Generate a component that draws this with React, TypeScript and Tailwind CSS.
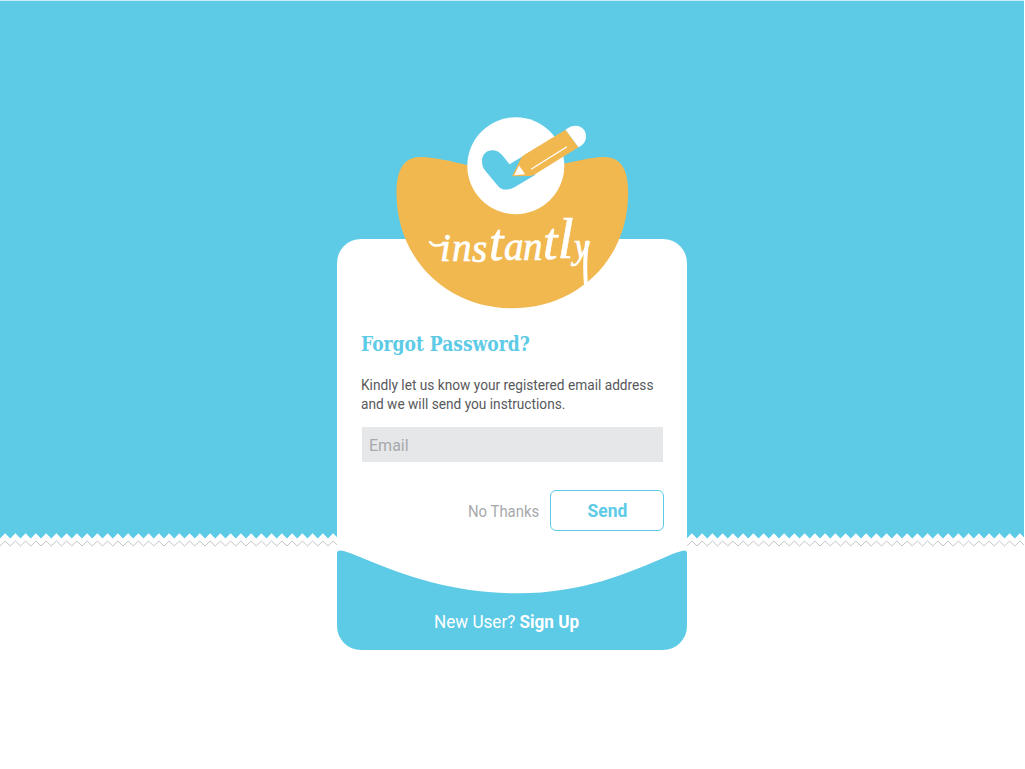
import React from "react";

const PERIOD = 10.25;

function zigzag(top: number, bottom: number, phase: number): string {
  const points: string[] = [];
  for (let i = -1; i < 102; i += 1) {
    const x = phase + i * PERIOD;
    points.push(`${x},${bottom}`, `${x + PERIOD / 2},${top}`);
  }
  return points.join(" ");
}

function Backdrop() {
  return (
    <div className="absolute inset-x-0 top-0 flex w-[1024px] flex-col overflow-hidden">
      <div className="h-px bg-[#cdeef8]" />
      <div className="h-[532px] bg-[#5dcae6]" />
      <svg width="1024" height="16" viewBox="0 0 1024 16" className="block">
        <polygon points={`-20,0 ${zigzag(0.3, 5.4, 0)} 1060,0`} fill="#5dcae6" />
        <polyline points={zigzag(8, 13, 0)} fill="none" stroke="#c4c4c4" strokeWidth="1" />
      </svg>
    </div>
  );
}

function Logo() {
  return (
    <svg width="234" height="194" viewBox="395 116 234 194" className="block" role="img" aria-label="instantly">
      <path
        d="M467 165C450 161 436 157.500 421 157C404 157 396.500 169 396.500 193C396.500 260 448 308.300 512 308.300C577 308.300 628.200 260 628.200 193C628.200 168 620 157 604 157C589 157.500 579 161 564 163.500Z"
        fill="#f1b850"
      />
      <circle cx="515.800" cy="165.700" r="48.500" fill="#fff" />
      <path
        d="M509.500 164.300L503.300 156.500C500 152.500 497 150.300 492.500 150.300C486 150.300 482 155 482 161.500C482 165 483 168 485.500 171L498 186C501.500 190.500 508 190.500 514 187.500L535 175L530 152Z"
        fill="#5dcae6"
      />
      <path d="M512 176.300L520.300 159.500Q521.500 156.500 524 155L565.500 129.800L578.500 147.200L535 174.300Q532.500 175.800 530 175.900Z" fill="#f1b850" />
      <path d="M519 165.500L525.200 174.300L514.200 175.300Z" fill="#fff" />
      <path d="M565.500 129.800C570 126.500 573 125.700 576 125.800C582 126.300 586 130.500 586 136.500C586 141.500 583 145 578.500 147.200Z" fill="#fff" />
      <path d="M531.500 169L566.500 147" stroke="#fff" strokeWidth="1.300" strokeLinecap="round" />
      <text
        x="440 452 472 489 504 523 543 557.5 574"
        y="261 261 262 260 260 260 259 258 258"
        fill="#fff"
        stroke="#fff"
        strokeWidth="0.7"
        strokeLinejoin="round"
        className="font-['Liberation_Serif',serif] text-[39px] italic"
      >
        ins
        <tspan className="text-[52px]">t</tspan>
        an
        <tspan className="text-[52px]">t</tspan>
        <tspan className="text-[58px]">l</tspan>
        <tspan className="text-[35px]">y</tspan>
      </text>
      <path d="M430 242Q434 248 444 244" fill="none" stroke="#fff" strokeWidth="2.500" strokeLinecap="round" />
      <path d="M587 243Q584 262 586 285" fill="none" stroke="#fff" strokeWidth="4" strokeLinecap="round" />
    </svg>
  );
}

export default function App() {
  return (
    <main className="relative flex h-[769px] w-[1025px] justify-center overflow-hidden bg-white font-[Roboto,sans-serif]">
      <Backdrop />
      <section className="relative mr-px mt-[239px] flex h-[411px] w-[350px] flex-col rounded-[24px] bg-white">
        <header className="-mt-[123px] pl-[58px]">
          <Logo />
        </header>
        <form className="flex flex-col px-6" onSubmit={(event) => event.preventDefault()}>
          <h1 className="mt-[19px] h-[30px] origin-left scale-x-[0.855] whitespace-nowrap font-['DejaVu_Serif',serif] text-[20px] font-bold leading-[30px] text-[#5dcae6]">
            Forgot Password?
          </h1>
          <p className="mt-[17px] origin-left scale-x-[0.912] whitespace-nowrap text-[15px] leading-[19px] text-[#58595b]">
            Kindly let us know your registered email address
            <br />
            and we will send you instructions.
          </p>
          <input
            type="email"
            aria-label="Email"
            placeholder="Email"
            className="ml-px mt-[13px] h-[35px] w-[301px] bg-[#e6e7e9] px-[7px] pt-[2px] text-[16px] text-[#58595b] outline-none placeholder:text-[#a7a9ac] placeholder:opacity-100"
          />
          <div className="mt-[28px] flex items-center justify-end">
            <button type="button" className="mr-[11px] w-[71px] whitespace-nowrap pt-[2px] text-left text-[16px] text-[#a7a9ac]">
              <span className="inline-block origin-left scale-x-[0.93]">No Thanks</span>
            </button>
            <button type="submit" className="-mr-px h-[41px] w-[114px] rounded-[6px] border border-[#5dcae6] text-[18px] font-bold text-[#5dcae6]">
              <span className="ml-[2px] inline-block scale-x-[0.97]">Send</span>
            </button>
          </div>
        </form>
        <footer className="mt-auto flex h-[101px] flex-col overflow-hidden rounded-b-[24px]">
          <svg width="350" height="46" viewBox="0 0 350 46" className="block shrink-0">
            <path d="M0 46V4Q0 1.500 3 1.500C8 1.500 18 6 29 10.500C70 27.500 118 44.300 181 44.300C245 44.300 292 24 333 6Q344 1.500 348 1.500Q350 1.500 350 4V46Z" fill="#5dcae6" />
          </svg>
          <p className="flex h-[55px] shrink-0 justify-center bg-[#5dcae6] pr-[11px] pt-[13px] text-[19px] leading-[28px] text-white">
            <span className="origin-center scale-x-[0.9] whitespace-nowrap">
              New User? <a href="#signup" className="font-bold">Sign Up</a>
            </span>
          </p>
        </footer>
      </section>
    </main>
  );
}
